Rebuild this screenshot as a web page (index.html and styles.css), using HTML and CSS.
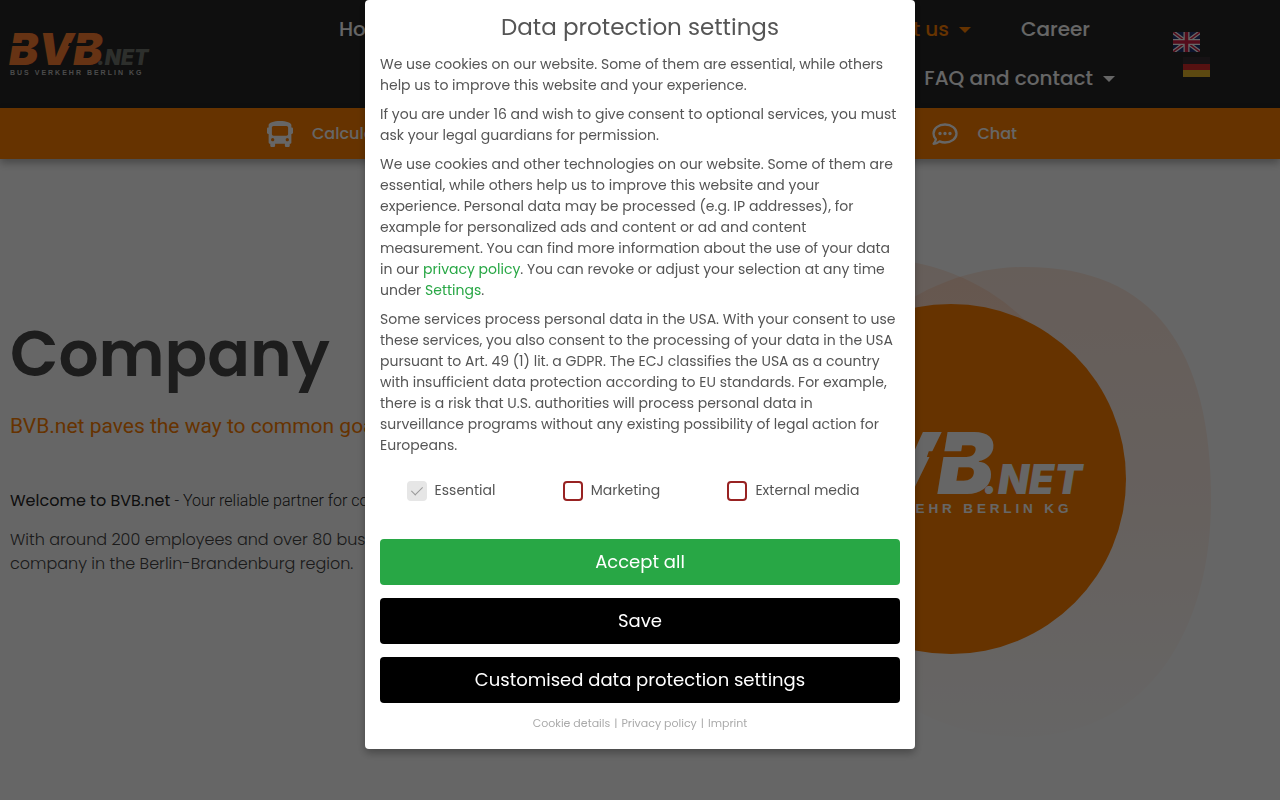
FILE: index.html
```html
<!DOCTYPE html>
<html lang="en">
  <head>
    <meta charset="UTF-8" />
    <meta name="viewport" content="width=device-width, initial-scale=1.0" />
    <title>Company - BVB.net</title>
    <link rel="stylesheet" href="styles.css" />
  </head>
  <body>
    <!-- Shared logo -->
    <svg class="sprite" aria-hidden="true">
      <symbol id="logo" viewBox="0 0 140 43" overflow="visible">
        <text class="logo-main" x="-1" y="32">BVB<tspan class="logo-net" x="87">.NET</tspan></text>
        <path class="logo-cut" d="M0 10h19l-1 3H-1zM59 10h19l-1 3H58z" />
        <text class="logo-sub" x="0" y="42">BUS VERKEHR BERLIN KG</text>
      </symbol>
    </svg>

    <header class="header">
      <a href="#" class="logo" aria-label="BVB.net">
        <svg width="140" height="43"><use href="#logo" /></svg>
      </a>
      <nav class="nav">
        <div class="nav-row">
          <a href="#" class="nav-home">Home</a>
          <a href="#" class="active">About us
            <svg class="caret" viewBox="0 0 12 6"><path d="M0 0h12L6 6z" /></svg></a>
          <a href="#">Career</a>
        </div>
        <div class="nav-row">
          <a href="#">FAQ and contact
            <svg class="caret" viewBox="0 0 12 6"><path d="M0 0h12L6 6z" /></svg></a>
        </div>
      </nav>
      <div class="flags">
        <a href="#" aria-label="English">
          <svg width="27" height="20" viewBox="0 0 27 20">
            <path fill="#1f3372" d="M0 0h27v20H0z" />
            <path stroke="#fff" stroke-width="4" d="M0 0l27 20M27 0L0 20" />
            <path stroke="#d22045" stroke-width="1.5" d="M0 0l27 20M27 0L0 20" />
            <path stroke="#fff" stroke-width="6" d="M13.5 0v20M0 10h27" />
            <path stroke="#d22045" stroke-width="3.5" d="M13.5 0v20M0 10h27" />
          </svg>
        </a>
        <a href="#" aria-label="Deutsch" class="flag-de">
          <svg width="27" height="20" viewBox="0 0 27 20">
            <path fill="#372f32" d="M0 0h27v7H0z" />
            <path fill="#d62b2b" d="M0 7h27v6H0z" />
            <path fill="#e5b62b" d="M0 13h27v7H0z" />
          </svg>
        </a>
      </div>
    </header>

    <div class="quickbar">
      <div class="quickbar-inner">
        <a href="#">
          <svg width="26" height="26" viewBox="0 0 512 512" fill="currentColor">
            <path d="M488 128h-8V80c0-44.800-99.200-80-224-80S32 35.200 32 80v48h-8c-13.250 0-24 10.740-24 24v80c0 13.250 10.750 24 24 24h8v160c0 17.670 14.330 32 32 32v32c0 17.670 14.330 32 32 32h32c17.670 0 32-14.330 32-32v-32h192v32c0 17.670 14.330 32 32 32h32c17.670 0 32-14.330 32-32v-32h6.400c16 0 25.600-12.800 25.600-25.600V256h8c13.250 0 24-10.750 24-24v-80c0-13.260-10.750-24-24-24zM112 400c-17.670 0-32-14.330-32-32s14.330-32 32-32 32 14.330 32 32-14.330 32-32 32zm16-112c-17.670 0-32-14.330-32-32V128c0-17.670 14.330-32 32-32h256c17.670 0 32 14.330 32 32v128c0 17.670-14.330 32-32 32H128zm272 112c-17.670 0-32-14.330-32-32s14.330-32 32-32 32 14.330 32 32-14.330 32-32 32z" />
          </svg>
          Calculate
        </a>
        <a href="#">
          <svg width="26" height="26" viewBox="0 0 26 26" fill="none" stroke="currentColor" stroke-width="2.300" stroke-linejoin="round">
            <path d="M13 3.500c6.500 0 11.500 4 11.500 9s-5 9-11.500 9c-2 0-3.800-.4-5.400-1.100C6 21.600 4.200 22.800 1.600 22.800c1.200-1.300 2-2.800 2.300-4.500C2.400 16.700 1.500 14.700 1.500 12.500c0-5 5-9 11.500-9z" />
            <path stroke="none" fill="currentColor" d="M8 10.800a1.700 1.700 0 1 1 0 3.400 1.700 1.700 0 0 1 0-3.400zM13 10.800a1.700 1.700 0 1 1 0 3.400 1.700 1.700 0 0 1 0-3.400zM18 10.800a1.700 1.700 0 1 1 0 3.400 1.700 1.700 0 0 1 0-3.400z" />
          </svg>
          Chat
        </a>
      </div>
    </div>

    <main class="hero">
      <div class="hero-text">
        <h1>Company</h1>
        <h2>BVB.net paves the way to common goals</h2>
        <p class="welcome"><strong>Welcome to BVB.net </strong>- Your reliable partner for coach travel</p>
        <p>With around 200 employees and over 80 buses, a strong<br />company in the Berlin-Brandenburg region.</p>
      </div>
      <svg class="hero-art" viewBox="650 250 570 490">
        <defs>
          <linearGradient id="fade" x1="0" y1="0" x2="0" y2="1">
            <stop offset="0" stop-color="#ff6a1a" stop-opacity="0.14" />
            <stop offset="0.5" stop-color="#ff6a1a" stop-opacity="0.09" />
            <stop offset="1" stop-color="#ff6a1a" stop-opacity="0.01" />
          </linearGradient>
        </defs>
        <ellipse cx="870" cy="460" rx="215" ry="202" fill="url(#fade)" />
        <path fill="url(#fade)" d="M1025 267C1155 267 1211 350 1211 500C1211 640 1140 737 1020 737C900 737 800 640 800 500C800 360 910 267 1025 267z" />
        <circle cx="951" cy="479" r="175" fill="#ff8000" />
        <use href="#logo" class="logo-white" x="815" y="432" width="270" height="83" />
      </svg>
    </main>

    <!-- Cookie dialog -->
    <div class="overlay">
      <form class="cookie-box" role="dialog" aria-labelledby="cookieTitle">
        <h3 id="cookieTitle">Data protection settings</h3>
        <p>We use cookies on our website. Some of them are essential, while others<br />help us to improve this website and your experience.</p>
        <p>If you are under 16 and wish to give consent to optional services, you must<br />ask your legal guardians for permission.</p>
        <p>
          We use cookies and other technologies on our website. Some of them are<br />
          essential, while others help us to improve this website and your<br />
          experience. Personal data may be processed (e.g. IP addresses), for<br />
          example for personalized ads and content or ad and content<br />
          measurement. You can find more information about the use of your data<br />
          in our <a href="#">privacy policy</a>. You can revoke or adjust your selection at any time<br />
          under <a href="#">Settings</a>.
        </p>
        <p>
          Some services process personal data in the USA. With your consent to use<br />
          these services, you also consent to the processing of your data in the USA<br />
          pursuant to Art. 49 (1) lit. a GDPR. The ECJ classifies the USA as a country<br />
          with insufficient data protection according to EU standards. For example,<br />
          there is a risk that U.S. authorities will process personal data in<br />
          surveillance programs without any existing possibility of legal action for<br />
          Europeans.
        </p>
        <div class="options">
          <label for="essential"><input type="checkbox" id="essential" checked disabled />Essential</label>
          <label for="marketing"><input type="checkbox" id="marketing" />Marketing</label>
          <label for="external"><input type="checkbox" id="external" />External media</label>
        </div>
        <div class="buttons">
          <button type="button" class="btn btn-accept">Accept all</button>
          <button type="button" class="btn">Save</button>
          <button type="button" class="btn">Customised data protection settings</button>
        </div>
        <div class="links">
          <a href="#">Cookie details</a>
          <span>|</span>
          <a href="#">Privacy policy</a>
          <span>|</span>
          <a href="#">Imprint</a>
        </div>
      </form>
    </div>
  </body>
</html>
```
FILE: styles.css
```css
:root {
  --orange: #ff8000;
  --dark: #262626;
  --heading: #4a4a4a;
  --green: #28a745;
  --text: #555555;
}

* {
  margin: 0;
  padding: 0;
  box-sizing: border-box;
}

body {
  font-family: "Poppins", "Inter", sans-serif;
  font-size: 16px;
  color: var(--dark);
  background: #fff;
  overflow: hidden;
}

a {
  color: inherit;
  text-decoration: none;
}

svg {
  display: block;
}

.sprite {
  position: absolute;
  width: 0;
  height: 0;
}

/* Header */
.header {
  display: flex;
  align-items: flex-start;
  height: 108px;
  padding: 0 70px 0 10px;
  background: var(--dark);
}

.logo {
  margin-top: 33px;
  color: #ff7f32;
  --net: #72756f;
  --cut: var(--dark);
  --sub: #bbbbbb;
}

.logo svg {
  overflow: visible;
}

.logo-main {
  font-family: "Inter", sans-serif;
  font-size: 44px;
  font-weight: 900;
  font-style: italic;
  fill: currentColor;
}

.logo-net {
  font-size: 21px;
  fill: var(--net);
}

.logo-sub {
  font-family: "Liberation Sans", sans-serif;
  font-size: 7px;
  font-weight: 700;
  letter-spacing: 2px;
  fill: var(--sub);
}

.logo-cut {
  fill: var(--cut);
}

.nav {
  flex: 1;
  margin: 5px 58px 0 189px;
  font-size: 20px;
  font-weight: 500;
  color: #fff;
}

.nav-row {
  display: flex;
  justify-content: flex-end;
  gap: 50px;
  height: 49px;
  line-height: 49px;
}

.nav-row:first-child {
  padding-right: 25px;
}

.nav-home {
  margin-right: auto;
}

.nav a {
  display: flex;
  align-items: center;
  gap: 10px;
  white-space: nowrap;
}

.nav .active {
  color: var(--orange);
}

.caret {
  width: 12px;
  height: 6px;
  fill: currentColor;
}

.flags {
  display: flex;
  flex-direction: column;
  gap: 5px;
  margin-top: 32px;
}

.flag-de {
  margin-left: 10px;
}

/* Orange bar */
.quickbar {
  position: relative;
  height: 51px;
  background: var(--orange);
  box-shadow: 0 4px 8px rgba(0, 0, 0, 0.3);
}

.quickbar-inner {
  display: flex;
  justify-content: space-between;
  max-width: 754px;
  height: 100%;
  margin: 0 auto;
  padding-left: 4px;
}

.quickbar a {
  display: flex;
  align-items: center;
  gap: 19px;
  font-weight: 500;
  color: #fff;
}

/* Hero */
.hero {
  display: grid;
  grid-template-columns: 1fr 1fr;
  padding: 0 10px;
}

.hero-text {
  padding-top: 147px;
}

.hero h1 {
  font-size: 63px;
  font-weight: 600;
  line-height: 96px;
  color: var(--heading);
}

.hero h2 {
  margin: 11px 0 50px;
  font-family: "Roboto", sans-serif;
  font-size: 21px;
  font-weight: 400;
  line-height: 26px;
  color: var(--orange);
}

.hero p {
  font-weight: 300;
  line-height: 24px;
  margin-bottom: 15px;
  white-space: nowrap;
  color: #444;
}

.hero .welcome {
  font-family: "Roboto", sans-serif;
  color: var(--dark);
}

.welcome strong {
  font-family: "Poppins", "Inter", sans-serif;
  font-weight: 400;
}

.hero-art {
  width: 570px;
  margin: 91px 50px 0 10px;
}

.logo-white {
  color: #fff;
  --net: #fff;
  --cut: var(--orange);
  --sub: #fff;
}

/* Cookie dialog */
.overlay {
  position: fixed;
  inset: 0;
  display: flex;
  justify-content: center;
  align-items: flex-start;
  background: rgba(0, 0, 0, 0.6);
}

.cookie-box {
  width: 550px;
  padding: 11px 15px 15px;
  background: #fff;
  border-radius: 4px;
  box-shadow: 0 4px 8px rgba(0, 0, 0, 0.3);
  font-size: 14px;
  line-height: 21px;
  color: var(--text);
}

.cookie-box h3 {
  margin-bottom: 11px;
  font-size: 23px;
  font-weight: 400;
  line-height: 32px;
  text-align: center;
}

.cookie-box p {
  margin-bottom: 8px;
  white-space: nowrap;
}

.cookie-box p a {
  color: var(--green);
}

.options {
  display: flex;
  justify-content: space-around;
  margin: 24px 0 38px;
}

.options label {
  display: flex;
  align-items: center;
  gap: 8px;
  margin-right: 14px;
}

.options input {
  appearance: none;
  width: 20px;
  height: 20px;
  border: 2px solid #982222;
  border-radius: 4px;
  background: #fff;
}

.options input:disabled {
  position: relative;
  border-color: #e6e6e6;
  background: #e6e6e6;
}

/* tick */
.options input:checked::after {
  content: "";
  position: absolute;
  left: 5px;
  top: 1px;
  width: 5px;
  height: 10px;
  border: solid #999;
  border-width: 0 1px 1px 0;
  transform: rotate(45deg);
}

.buttons {
  display: grid;
  gap: 13px;
}

.btn {
  height: 46px;
  padding-bottom: 2px;
  border: none;
  border-radius: 4px;
  background: #000;
  color: #fff;
  font-family: inherit;
  font-size: 18px;
  cursor: pointer;
}

.btn-accept {
  background: var(--green);
}

.links {
  display: flex;
  justify-content: center;
  gap: 4px;
  margin-top: 10px;
  font-size: 11px;
  color: #aaa;
}
```
